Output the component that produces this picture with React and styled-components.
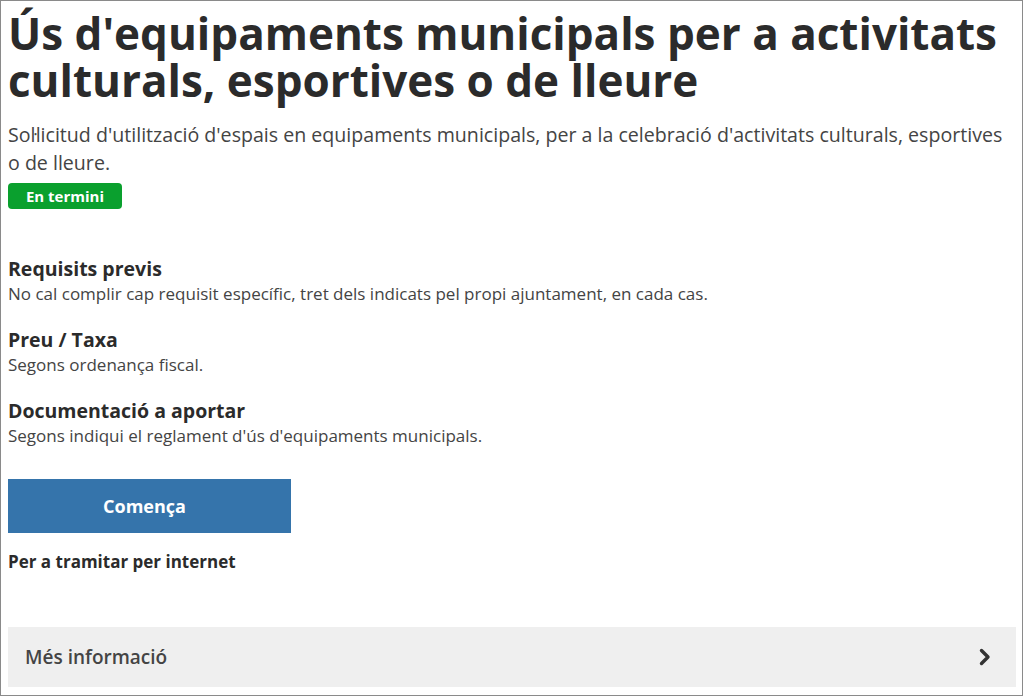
import React from 'react';
import styled, { createGlobalStyle } from 'styled-components';

const GlobalStyle = createGlobalStyle`
  html, body {
    margin: 0;
    padding: 0;
    background: #fff;
  }
  * {
    box-sizing: border-box;
  }
`;

const Frame = styled.div`
  width: 1023px;
  height: 696px;
  border: 1px solid #8a8a8a;
  padding: 0 7px;
  font-family: 'Open Sans', 'Liberation Sans', sans-serif;
  color: #333;
  overflow: hidden;
`;

const Title = styled.h1`
  margin: 9px 0 0 0;
  font-size: 44px;
  line-height: 47px;
  font-weight: 700;
  color: #2b2b2b;
`;

const Lead = styled.p`
  margin: 17px 0 0 0;
  max-width: 1001px;
  font-size: 19.6px;
  line-height: 28px;
  color: #444;
`;

const Badge = styled.span`
  display: flex;
  align-items: center;
  justify-content: center;
  width: 114px;
  height: 26px;
  margin-top: 6px;
  border-radius: 4px;
  background: #0aa02e;
  color: #fff;
  font-size: 15px;
  font-weight: 700;
`;

const Sections = styled.div`
  margin-top: 46px;
  display: flex;
  flex-direction: column;
  gap: 20px;
`;

const Section = styled.section`
  display: flex;
  flex-direction: column;
`;

const SectionTitle = styled.h3`
  margin: 0;
  font-size: 19.5px;
  line-height: 27px;
  font-weight: 700;
  color: #2b2b2b;
`;

const SectionText = styled.p`
  margin: 0;
  font-size: 17px;
  line-height: 24px;
  color: #444;
`;

const StartButton = styled.button`
  display: block;
  margin-top: 31px;
  width: 283px;
  height: 54px;
  padding: 0 10px 0 0;
  border: none;
  background: #3574ab;
  color: #fff;
  font-family: inherit;
  font-size: 18px;
  font-weight: 700;
  cursor: pointer;
`;

const Note = styled.p`
  margin: 17px 0 0 0;
  font-size: 17px;
  line-height: 24px;
  font-weight: 700;
  color: #2b2b2b;
`;

const MoreBar = styled.div`
  margin-top: 53px;
  width: 1008px;
  height: 60px;
  background: #efefef;
  display: flex;
  align-items: center;
  justify-content: space-between;
  padding: 0 24px 0 17px;
  font-size: 19px;
  font-weight: 600;
  color: #444;
`;

const Chevron = () => (
  <svg width="14" height="18" viewBox="0 0 14 18" aria-hidden="true">
    <path d="M3.5 2.5 L10 9 L3.5 15.5" fill="none" stroke="#333" strokeWidth="3.4" strokeLinecap="round" strokeLinejoin="round" />
  </svg>
);

const sections = [
  {
    title: 'Requisits previs',
    text: 'No cal complir cap requisit específic, tret dels indicats pel propi ajuntament, en cada cas.',
  },
  { title: 'Preu / Taxa', text: 'Segons ordenança fiscal.' },
  {
    title: 'Documentació a aportar',
    text: "Segons indiqui el reglament d'ús d'equipaments municipals.",
  },
];

const App = () => (
  <>
    <GlobalStyle />
    <Frame>
      <Title>Ús d'equipaments municipals per a activitats culturals, esportives o de lleure</Title>
      <Lead>
        Soŀlicitud d'utilització d'espais en equipaments municipals, per a la celebració d'activitats culturals, esportives o de lleure.
      </Lead>
      <Badge>En termini</Badge>
      <Sections>
        {sections.map(({ title, text }) => (
          <Section key={title}>
            <SectionTitle>{title}</SectionTitle>
            <SectionText>{text}</SectionText>
          </Section>
        ))}
      </Sections>
      <StartButton>Comença</StartButton>
      <Note>Per a tramitar per internet</Note>
      <MoreBar>
        <span>Més informació</span>
        <Chevron />
      </MoreBar>
    </Frame>
  </>
);

export default App;
